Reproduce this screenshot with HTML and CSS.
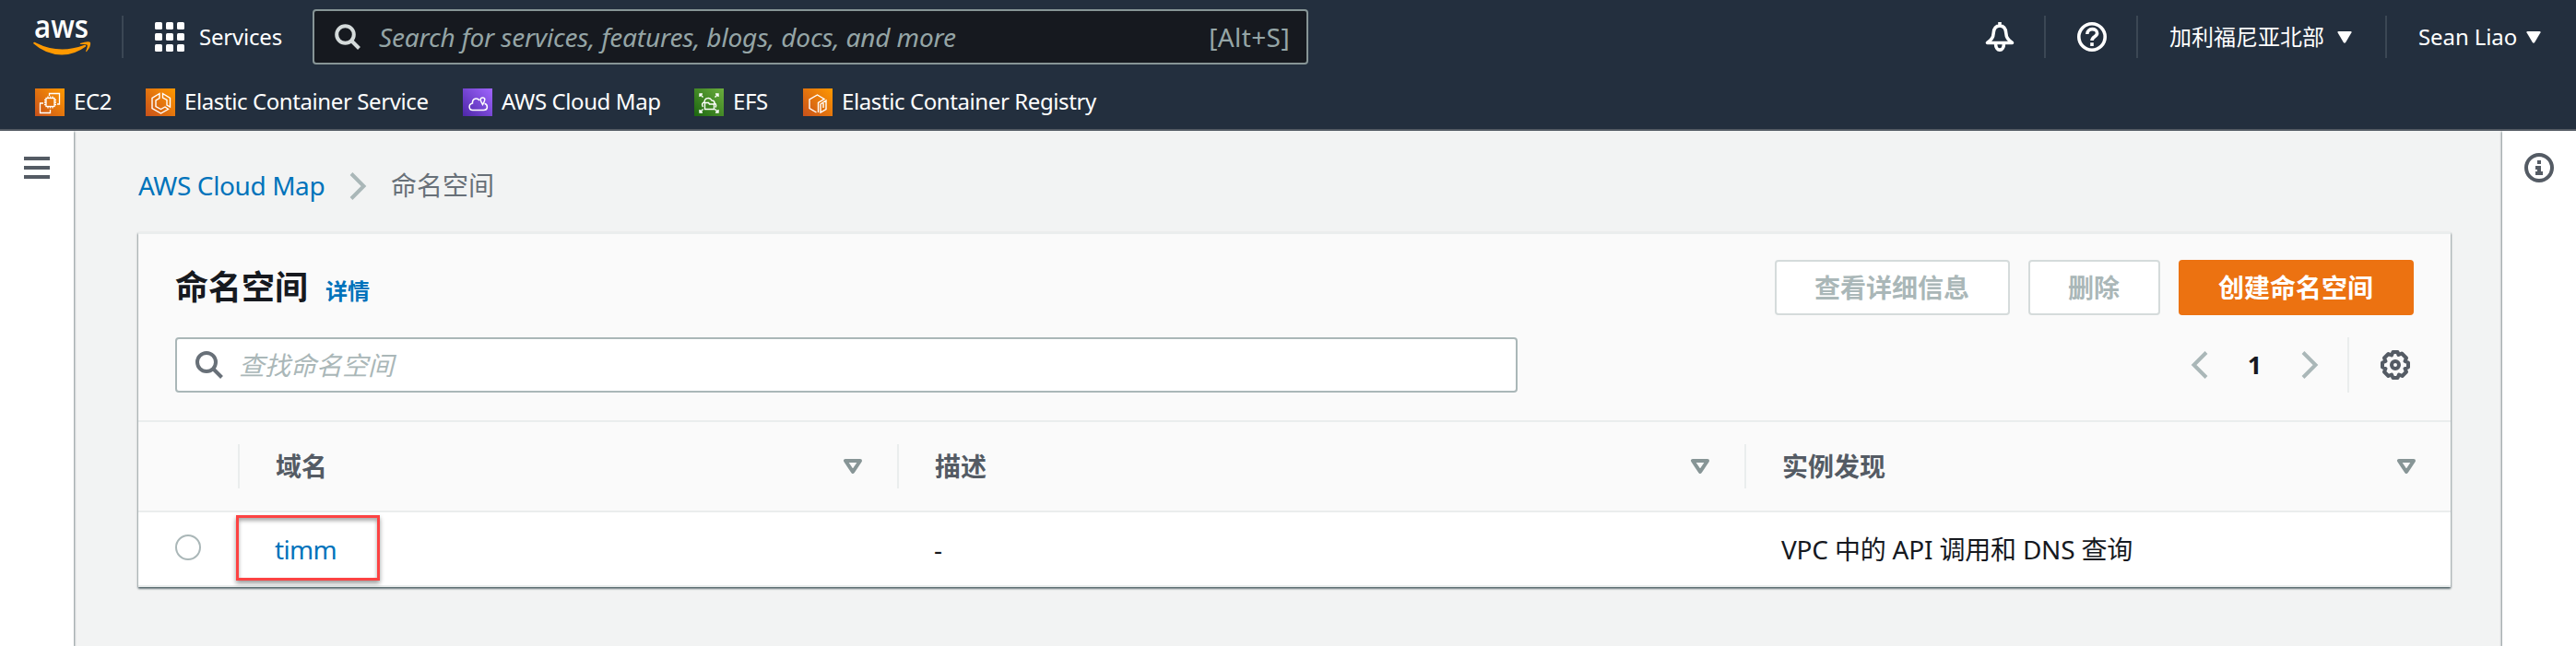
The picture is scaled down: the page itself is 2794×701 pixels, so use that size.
FILE: index.html
```html
<!DOCTYPE html>
<html lang="zh-CN">
<head>
<meta charset="utf-8">
<title>AWS Cloud Map</title>
<link rel="stylesheet" href="styles.css">
</head>
<body>
<header class="header">
  <div class="topbar">
    <svg class="logo" viewBox="0 0 64 40"><text class="logo-text" x="1" y="21" textLength="59" lengthAdjust="spacingAndGlyphs">aws</text><path d="M0 27q1-2 3-.6Q28 39 55 29q3-1 2 1.500Q45 39.500 31 39.500 13 39 0 27z" fill="#f90"/><path d="M51 27q9-3 11-1 1 4-4 10-1 .5-.8-.8 2-5 1.500-6.500-1-1-7-.6-1.500 0-.7-1.100z" fill="#f90"/></svg>
    <i class="divider"></i>
    <svg class="grid" viewBox="0 0 32 32" fill="#fff"><rect width="8" height="8" rx="1.500"/><rect x="12" width="8" height="8" rx="1.500"/><rect x="24" width="8" height="8" rx="1.500"/><rect y="12" width="8" height="8" rx="1.500"/><rect x="12" y="12" width="8" height="8" rx="1.500"/><rect x="24" y="12" width="8" height="8" rx="1.500"/><rect y="24" width="8" height="8" rx="1.500"/><rect x="12" y="24" width="8" height="8" rx="1.500"/><rect x="24" y="24" width="8" height="8" rx="1.500"/></svg>
    <span class="services">Services</span>
    <div class="search">
      <svg class="search-icon" viewBox="0 0 28 28" fill="none" stroke="#d5dbdb" stroke-width="4"><circle cx="11.500" cy="11.500" r="9.300"/><path d="M18 18l8.500 8.500"/></svg>
      <span class="search-hint">Search for services, features, blogs, docs, and more</span>
      <span class="shortcut">[Alt+S]</span>
    </div>
    <div class="tools">
      <svg class="icon32" viewBox="0 0 32 32" fill="none" stroke="#fff" stroke-width="3.600" stroke-linejoin="round"><path d="M16 0v4M16 4c-4.500 0-6.500 3.500-6.800 8-.3 5-2.200 7-6.700 10.500h27C25 19 23.100 17 22.800 12c-.3-4.500-2.300-8-6.800-8zM11.500 23c0 9.500 9 9.500 9 0"/></svg>
      <i class="divider"></i>
      <svg class="icon32" viewBox="0 0 32 32" fill="none" stroke="#fff" stroke-width="3.600"><circle cx="16" cy="16" r="14.200"/><path d="M10.800 13c0-7 10.800-7 10.800-1 0 4-5.600 3.500-5.600 8M16 22.300v3.700"/></svg>
      <i class="divider"></i>
      <span class="region">加利福尼亚北部</span>
      <svg class="caret" viewBox="0 0 16 13"><path d="M1.500 0h13q1.500 0 1 1.200L9.200 12q-1.200 1.500-2.400 0L.5 1.200Q0 0 1.500 0z" fill="#fff"/></svg>
      <i class="divider"></i>
      <span class="user">Sean Liao</span>
      <svg class="caret" viewBox="0 0 16 13"><path d="M1.500 0h13q1.500 0 1 1.200L9.200 12q-1.200 1.500-2.400 0L.5 1.200Q0 0 1.500 0z" fill="#fff"/></svg>
    </div>
  </div>
  <nav class="favorites">
    <a class="fav fav-ec2"><svg class="tile orange" viewBox="0 0 32 30" fill="none" stroke="#fff" stroke-width="1.300"><rect x="12" y="10.500" width="9" height="9"/><path d="M14 10.500v-2M16.500 10.500v-2M19 10.500v-2M14 19.500v2M16.500 19.500v2M19 19.500v2M12 12.500h-2M12 15h-2M12 17.500h-2M21 12.500h2M21 15h2M21 17.500h2M15.500 8V5.500h11v11.500H24M9 16H5.500v10.500h11V23"/></svg><span>EC2</span></a>
    <a class="fav fav-ecs"><svg class="tile orange" viewBox="0 0 32 30" fill="none" stroke="#fff" stroke-width="1.400"><path d="M15 5.500L7 10.500v11l9.500 5.500 8-4.500-3.500-2.500-4.500 2.500-5.500-3v-6.500l4-2.500zM18.500 5.500l8 5v9.500l-3.500-2v-5.500L18.500 10z"/></svg><span>Elastic Container Service</span></a>
    <a class="fav fav-map"><svg class="tile purple" viewBox="0 0 32 30" fill="none" stroke="#fff" stroke-width="1.500"><path d="M18 13c-2.500-3.500-8-2-7.500 3-5 1-4 7.500 0 7.500h12c5 0 5-6 1-7.200M21.500 17.500c-3.200-5-3-7.500 0-7.500s3.200 2.500 0 7.500z"/></svg><span>AWS Cloud Map</span></a>
    <a class="fav fav-efs"><svg class="tile green" viewBox="0 0 32 30" fill="none" stroke="#fff" stroke-width="1.400"><path d="M6 9V6h3M6 6l3.500 3.500M23 6h3v3M26 6l-3.500 3.500M6 23v3h3M6 26l3.500-3.500M23 26h3v-3M26 26l-3.500-3.500M11.500 15.500h4l1 1.500h5v5.500h-10zM9.500 20c-2-3 0-5 1.500-5 0-5 6-6 8-2 3 0 3 2 3 3 2 1 2 3 1 4.500"/></svg><span>EFS</span></a>
    <a class="fav fav-ecr"><svg class="tile orange" viewBox="0 0 32 30" fill="none" stroke="#fff" stroke-width="1.400"><path d="M14.500 26L7 21.500V12l8.500-5 7.500 4.500-6.500 4V26M19 26v-9l6-4v9.500zM22 16v5"/></svg><span>Elastic Container Registry</span></a>
  </nav>
</header>
<div class="body">
  <aside class="side left"><svg class="menu" viewBox="0 0 28 24" fill="#545b64"><path d="M0 0h28v4H0zM0 10h28v4H0zM0 20h28v4H0z"/></svg></aside>
  <main class="main">
    <div class="crumbs">
      <a class="crumb-link">AWS Cloud Map</a>
      <svg class="chevron" viewBox="0 0 19 30" fill="none" stroke="#aab7b8" stroke-width="4"><path d="M2 1.500L15.500 15 2 28.500"/></svg>
      <span class="crumb-current">命名空间</span>
    </div>
    <section class="card">
      <div class="card-top">
        <div class="title-row">
          <h1 class="title">命名空间</h1><a class="info-link">详情</a>
          <div class="actions">
            <button class="btn disabled">查看详细信息</button>
            <button class="btn disabled">删除</button>
            <button class="btn primary">创建命名空间</button>
          </div>
        </div>
        <div class="filter-row">
          <div class="filter">
            <svg class="filter-icon" viewBox="0 0 30 30" fill="none" stroke="#687078" stroke-width="4"><circle cx="12" cy="12" r="10"/><path d="M19 19l9.500 9.500"/></svg>
            <span>查找命名空间</span>
          </div>
          <div class="pager">
            <svg class="chevron" viewBox="0 0 19 30" fill="none" stroke="#aab7b8" stroke-width="4"><path d="M17 1.500L3.500 15 17 28.500"/></svg>
            <b class="page">1</b>
            <svg class="chevron" viewBox="0 0 19 30" fill="none" stroke="#aab7b8" stroke-width="4"><path d="M2 1.500L15.500 15 2 28.500"/></svg>
            <i class="pager-divider"></i>
            <svg class="icon32" viewBox="0 0 32 32" fill="none" stroke="#545b64" stroke-width="4" stroke-linejoin="round"><path d="M13.500 2h5l1 3 3.500-1.500 5 5-1.500 3.500 3.500 1.500v5L26.500 20 28 23.500 23.500 28 20 26.500 18.500 30h-5L12 26.500 8.500 28 4 23.500 5.500 20 2 18.500v-5L5.500 12 4 8.500 8.500 4 12 5.500z"/><circle cx="16" cy="16" r="4"/></svg>
          </div>
        </div>
      </div>
      <div class="row head">
        <div class="cell"></div>
        <div class="cell sep">域名<svg class="sort" viewBox="0 0 20 16"><path d="M2 2h16l-8 12z" fill="none" stroke="#879596" stroke-width="4" stroke-linejoin="round"/></svg></div>
        <div class="cell sep">描述<svg class="sort" viewBox="0 0 20 16"><path d="M2 2h16l-8 12z" fill="none" stroke="#879596" stroke-width="4" stroke-linejoin="round"/></svg></div>
        <div class="cell sep">实例发现<svg class="sort" viewBox="0 0 20 16"><path d="M2 2h16l-8 12z" fill="none" stroke="#879596" stroke-width="4" stroke-linejoin="round"/></svg></div>
      </div>
      <div class="row data">
        <div class="cell"><i class="radio"></i></div>
        <div class="cell marked"><a class="name">timm</a><i class="highlight"></i></div>
        <div class="cell">-</div>
        <div class="cell"><span class="discovery">VPC 中的 API 调用和 DNS 查询</span></div>
      </div>
    </section>
  </main>
  <aside class="side right"><svg class="icon32" viewBox="0 0 32 32"><circle cx="16" cy="16" r="14" fill="none" stroke="#545b64" stroke-width="4"/><path d="M14 8h4v4h-4zM12 14h6v6h2v4h-8v-4h2v-2h-2z" fill="#545b64"/></svg></aside>
</div>
</body>
</html>
```

FILE: styles.css
```css
* { box-sizing: border-box; }
body { margin: 0; width: 2794px; height: 701px; overflow: hidden; background: #f2f3f3; color: #16191f; font: 28px/40px "Noto Sans", "Noto Sans CJK SC", sans-serif; white-space: nowrap; display: flex; flex-direction: column; }
svg { display: block; flex: none; overflow: visible; }
.header { height: 142px; flex: none; background: #232f3e; border-bottom: 2px solid #545b64; color: #fff; font-size: 24px; }
.topbar { height: 80px; display: flex; align-items: center; }
.logo { width: 64px; height: 40px; margin-left: 36px; }
.logo-text { font: 600 35px "Open Sans", sans-serif; fill: #fff; }
.divider { width: 2px; height: 46px; background: #3b4754; margin-left: 32px; flex: none; }
.grid { width: 32px; height: 32px; margin-left: 34px; }
.services { width: 123px; margin-left: 16px; letter-spacing: -.2px; }
.search { width: 1080px; height: 60px; background: #16191f; border: 2px solid #879596; border-radius: 4px; display: flex; align-items: center; padding: 0 18px 0 22px; color: #95a5a6; font-size: 28px; }
.search-icon { width: 28px; height: 28px; }
.search-hint { margin-left: 20px; font-style: italic; letter-spacing: -.15px; }
.shortcut { margin-left: auto; letter-spacing: .4px; }
.tools { margin-left: auto; margin-right: 38px; display: flex; align-items: center; }
.icon32 { width: 32px; height: 32px; }
.tools .icon32 + .divider { margin: 0 34px 0 32px; }
.region { width: 170px; }
.caret { width: 16px; height: 13px; margin-left: 12px; }
.caret + .divider { margin: 0 34px 0 36px; }
.user { width: 105px; letter-spacing: -.1px; }
.favorites { display: flex; height: 60px; align-items: flex-start; padding: 16px 0 0 38px; letter-spacing: -.4px; }
.fav { display: flex; align-items: center; gap: 10px; height: 30px; }
.fav span { margin-top: -2px; }
.fav-ec2 { width: 120px; }
.fav-ecs { width: 344px; }
.fav-map { width: 251px; }
.fav-efs { width: 118px; }
.tile { width: 32px; height: 30px; }
.orange { background: linear-gradient(45deg, #c8511b, #f90); }
.purple { background: linear-gradient(45deg, #4d27a8, #a166ff); }
.green { background: linear-gradient(45deg, #1b660f, #6cae3e); }
.body { flex: 1; display: flex; }
.side { width: 80px; background: #fff; flex: none; position: relative; }
.left { box-shadow: 1px 1px 2px rgba(0, 28, 36, .45); padding: 28px 26px; }
.right { box-shadow: -1px 1px 2px rgba(0, 28, 36, .45); padding: 24px; }
.menu { width: 28px; height: 24px; }
.main { flex: 1; padding: 40px 56px 0 70px; }
.crumbs { display: flex; align-items: center; height: 40px; }
.crumb-link { width: 202px; margin-top: -2px; color: #0073bb; letter-spacing: -.4px; }
.chevron { width: 19px; height: 30px; }
.crumbs .chevron { margin: 0 26px 0 27px; }
.crumb-current { margin-top: -2px; color: #687078; }
.card { margin-top: 30px; border-top: 2px solid #eaeded; background: #fff; box-shadow: 0 2px 2px rgba(0, 28, 36, .5), 1px 1px 2px rgba(0, 28, 36, .2), -1px 1px 2px rgba(0, 28, 36, .2); }
.card-top { height: 204px; background: #fafafa; border-bottom: 2px solid #eaeded; padding: 28px 40px 0; }
.title-row { display: flex; height: 60px; align-items: center; }
.title { margin: 0; font-size: 36px; font-weight: 700; }
.info-link { margin: 7px 0 0 19px; font-size: 24px; font-weight: 700; color: #0073bb; }
.actions { display: flex; gap: 20px; margin-left: auto; }
.btn { height: 60px; padding: 0 42px 0 41px; border: 2px solid #d5dbdb; border-radius: 4px; background: #fff; color: #aab7b8; font: inherit; font-weight: 700; }
.primary { background: #ec7211; border-color: #ec7211; color: #fff; }
.filter-row { margin-top: 24px; display: flex; height: 60px; }
.filter { width: 1456px; border: 2px solid #aab7b8; border-radius: 4px; background: #fff; display: flex; align-items: center; gap: 17px; padding-left: 20px; color: #aab7b8; font-style: italic; }
.filter-icon { width: 30px; height: 30px; }
.pager { margin-left: auto; margin-right: 4px; display: flex; align-items: center; }
.page { width: 101px; text-align: center; font-size: 27px; }
.pager-divider { width: 2px; height: 60px; background: #eaeded; margin: 0 34px 0 31px; }
.row { display: grid; grid-template-columns: 108px 715px 919px 1fr; align-items: center; }
.head { height: 98px; background: #fafafa; border-bottom: 2px solid #eaeded; color: #545b64; font-weight: 700; }
.head .cell { height: 48px; display: flex; align-items: center; padding: 0 38px 0 39px; }
.sep { border-left: 2px solid #eaeded; }
.sort { width: 20px; height: 16px; margin-left: auto; }
.data { height: 81px; border-bottom: 2px solid #eaeded; }
.data .cell { padding-left: 40px; }
.radio { display: block; width: 28px; height: 28px; border: 2px solid #aab7b8; border-radius: 50%; background: #fff; margin-top: -4px; }
.marked { position: relative; }
.name { color: #0073bb; letter-spacing: -.7px; }
.discovery { letter-spacing: -.2px; }
.highlight { position: absolute; left: -2px; top: -17px; width: 156px; height: 71px; border: 3px solid #fc4343; box-shadow: 0 3px 5px rgba(0, 0, 0, .4), inset 0 3px 4px rgba(0, 0, 0, .35); }
```
